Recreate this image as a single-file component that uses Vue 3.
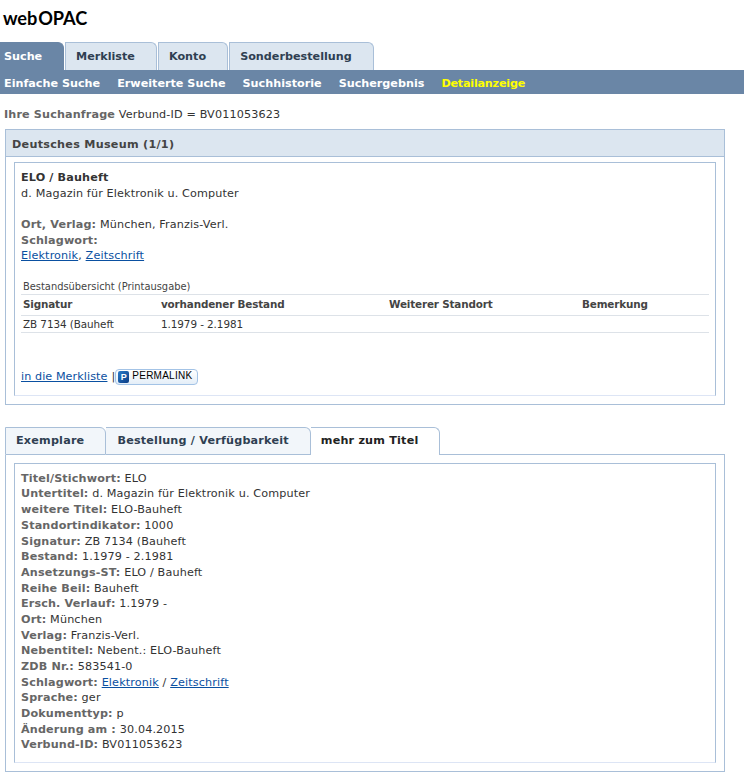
<template>
  <div class="page">
    <div class="logo">web<span class="logo-b">OPAC</span></div>

    <nav class="main-tabs">
      <a
        v-for="tab in mainTabs"
        :key="tab"
        class="main-tab"
        :class="{ active: tab === 'Suche' }"
      >{{ tab }}</a>
    </nav>
    <div class="subnav">
      <a
        v-for="item in subNav"
        :key="item"
        :class="{ current: item === 'Detailanzeige' }"
      >{{ item }}</a>
    </div>

    <p class="query"><b>Ihre Suchanfrage</b> Verbund-ID = BV011053623</p>

    <section class="outer">
      <h2 class="outer-head">Deutsches Museum (1/1)</h2>
      <div class="inner top-inner">
        <div class="title">ELO / Bauheft</div>
        <div>d. Magazin für Elektronik u. Computer</div>
        <div class="blank"></div>
        <div><b>Ort, Verlag:</b> München, Franzis-Verl.</div>
        <div><b>Schlagwort:</b></div>
        <div><a class="link">Elektronik</a>, <a class="link">Zeitschrift</a></div>

        <table class="holdings">
          <caption>Bestandsübersicht (Printausgabe)</caption>
          <thead>
            <tr>
              <th class="c1">Signatur</th>
              <th class="c2">vorhandener Bestand</th>
              <th class="c3">Weiterer Standort</th>
              <th>Bemerkung</th>
            </tr>
          </thead>
          <tbody>
            <tr>
              <td>ZB 7134 (Bauheft</td>
              <td>1.1979 - 2.1981</td>
              <td></td>
              <td></td>
            </tr>
          </tbody>
        </table>

        <div class="actions">
          <a class="link">in die Merkliste</a>
          <span class="sep">|</span>
          <span class="permalink"><span class="p-icon">P</span><span class="p-text">PERMALINK</span></span>
        </div>
      </div>
    </section>

    <div class="detail-tabs">
      <a
        v-for="tab in detailTabs"
        :key="tab"
        class="detail-tab"
        :class="{ active: tab === 'mehr zum Titel' }"
      >{{ tab }}</a>
      <span class="tab-fill"></span>
    </div>
    <section class="outer detail-body">
      <div class="inner bottom-inner">
        <div v-for="row in fields" :key="row.label">
          <b>{{ row.label }}</b> {{ row.value }}
          <template v-if="row.links">
            <a class="link">{{ row.links[0] }}</a> / <a class="link">{{ row.links[1] }}</a>
          </template>
        </div>
      </div>
    </section>
  </div>
</template>

<script setup>
const mainTabs = ['Suche', 'Merkliste', 'Konto', 'Sonderbestellung']
const subNav = ['Einfache Suche', 'Erweiterte Suche', 'Suchhistorie', 'Suchergebnis', 'Detailanzeige']
const detailTabs = ['Exemplare', 'Bestellung / Verfügbarkeit', 'mehr zum Titel']

const fields = [
  { label: 'Titel/Stichwort:', value: 'ELO' },
  { label: 'Untertitel:', value: 'd. Magazin für Elektronik u. Computer' },
  { label: 'weitere Titel:', value: 'ELO-Bauheft' },
  { label: 'Standortindikator:', value: '1000' },
  { label: 'Signatur:', value: 'ZB 7134 (Bauheft' },
  { label: 'Bestand:', value: '1.1979 - 2.1981' },
  { label: 'Ansetzungs-ST:', value: 'ELO / Bauheft' },
  { label: 'Reihe Beil:', value: 'Bauheft' },
  { label: 'Ersch. Verlauf:', value: '1.1979 -' },
  { label: 'Ort:', value: 'München' },
  { label: 'Verlag:', value: 'Franzis-Verl.' },
  { label: 'Nebentitel:', value: 'Nebent.: ELO-Bauheft' },
  { label: 'ZDB Nr.:', value: '583541-0' },
  { label: 'Schlagwort:', value: '', links: ['Elektronik', 'Zeitschrift'] },
  { label: 'Sprache:', value: 'ger' },
  { label: 'Dokumenttyp:', value: 'p' },
  { label: 'Änderung am :', value: '30.04.2015' },
  { label: 'Verbund-ID:', value: 'BV011053623' },
]
</script>

<style>
html,
body {
  background: #fff;
}
</style>

<style scoped>
.page {
  width: 744px;
  height: 784px;
  overflow: hidden;
  font-family: "DejaVu Sans", sans-serif;
  font-size: 11.2px;
  line-height: 15.68px;
  letter-spacing: 0.14px;
  color: #333;
}

.logo {
  height: 42px;
  padding: 6px 0 0 3px;
  box-sizing: border-box;
  font-family: Lato, sans-serif;
  font-size: 18.2px;
  line-height: 24px;
  font-weight: 700;
  color: #000;
  letter-spacing: -0.1px;
}

.logo-b {
  margin-left: 1px;
}

.main-tabs {
  display: flex;
  height: 28px;
  gap: 1px;
  letter-spacing: 0;
}

.main-tab {
  box-sizing: border-box;
  height: 28px;
  padding: 6px 21px 0 10px;
  font-weight: bold;
  color: #2f3f52;
  background: #dce6f0;
  border: 1px solid #a9bfd8;
  border-bottom: 0;
  border-radius: 0 6px 0 0;
}

.main-tab.active {
  width: 64px;
  padding-left: 3px;
  padding-right: 0;
  color: #fff;
  background: #6a86a6;
  border-color: #6a86a6;
}

.subnav {
  display: flex;
  gap: 17px;
  height: 24px;
  padding-left: 4px;
  background: #6a86a6;
  font-weight: bold;
  line-height: 27px;
  letter-spacing: 0;
  color: #fff;
}

.subnav .current {
  color: #ffff00;
  letter-spacing: -0.22px;
}

.query {
  margin: 13px 0 6px 4px;
}

.query b,
.inner b {
  color: #666;
}

.outer {
  box-sizing: border-box;
  width: 720px;
  margin-left: 5px;
  border: 1px solid #a9bfd8;
  padding: 0 8px 8px;
}

.outer-head {
  margin: 0 -8px 5px;
  height: 27px;
  padding-left: 6px;
  background: #dce6f0;
  border-bottom: 1px solid #a9bfd8;
  box-sizing: border-box;
  font-size: 11.2px;
  line-height: 29px;
  letter-spacing: 0.27px;
  color: #444;
}

.inner {
  box-sizing: border-box;
  width: 702px;
  border: 1px solid #a9bfd8;
  border-bottom-color: #dde5f5;
  padding: 7.3px 6px 0;
}

.top-inner {
  height: 234px;
}

.title {
  font-weight: bold;
}

.blank {
  height: 15.68px;
}

.link {
  color: #0a50a1;
  text-decoration: underline;
}

.holdings {
  width: 688px;
  margin-top: 14.7px;
  border-collapse: collapse;
  font-size: 10.4px;
  letter-spacing: 0;
  table-layout: fixed;
}

.holdings caption {
  text-align: left;
  padding: 0 2px;
  height: 15px;
  line-height: 16px;
  font-size: 9.9px;
  color: #444;
}

.holdings th,
.holdings td {
  text-align: left;
  padding: 0 2px;
  height: 20px;
  border-top: 1px solid #dde2e8;
  border-bottom: 1px solid #dde2e8;
  font-weight: normal;
  color: #333;
}

.holdings th {
  font-weight: bold;
  color: #444;
  letter-spacing: -0.16px;
}

.holdings td {
  height: 15px;
  padding-top: 1px;
  padding-bottom: 0;
  line-height: 14px;
  letter-spacing: -0.07px;
}

.c1 {
  width: 134px;
}

.c2 {
  width: 224px;
}

.c3 {
  width: 189px;
}

.actions {
  display: flex;
  align-items: center;
  margin-top: 36px;
  height: 16px;
  letter-spacing: 0.07px;
}

.sep {
  margin: 0 0 0 4px;
}

.permalink {
  display: flex;
  align-items: center;
  box-sizing: border-box;
  width: 83px;
  height: 16px;
  padding-left: 2px;
  border: 1px solid #a3c3e6;
  border-radius: 4px;
  background: linear-gradient(#fff, #e4eef8);
  font-family: "Liberation Sans", sans-serif;
  font-size: 10px;
  letter-spacing: 0.25px;
  line-height: 12px;
  color: #000;
}

.p-text {
  margin-top: -2px;
}

.p-icon {
  width: 11px;
  height: 12px;
  margin-right: 3px;
  border-radius: 2px;
  background: linear-gradient(135deg, #2a7ac8, #0b3d85);
  color: #fff;
  font-size: 9px;
  font-weight: bold;
  line-height: 12px;
  text-align: center;
  letter-spacing: 0;
}

.detail-tabs {
  display: flex;
  width: 720px;
  height: 28px;
  margin: 22px 0 0 5px;
  letter-spacing: 0.2px;
}

.detail-tab {
  box-sizing: border-box;
  height: 28px;
  padding: 5px 21px 0 11px;
  font-weight: bold;
  color: #2f3f52;
  background: #f2f6fa;
  border: 1px solid #a9bfd8;
  border-left-width: 0;
  border-radius: 0 6px 0 0;
}

.detail-tab:first-child {
  padding-left: 10px;
  border-left-width: 1px;
}

.detail-tab.active {
  padding-left: 10px;
  color: #222;
  background: #fff;
  border-bottom: 0;
}

.tab-fill {
  flex: 1;
  border-bottom: 1px solid #a9bfd8;
}

.detail-body {
  border-top: 0;
  padding-top: 8px;
}

.bottom-inner {
  height: 300px;
  padding-top: 7.08px;
}
</style>
